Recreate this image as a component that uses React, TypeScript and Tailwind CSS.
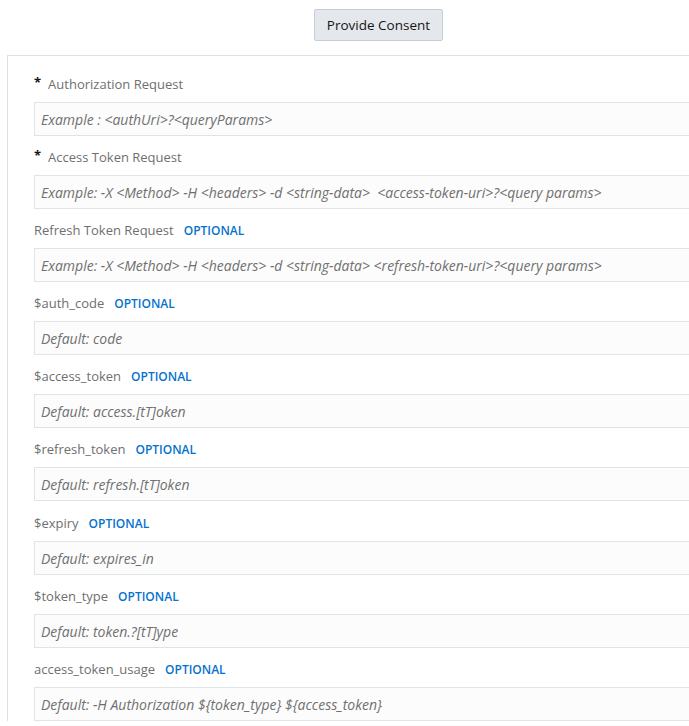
import React from "react";

type Field = {
  label: string;
  required?: boolean;
  optional?: boolean;
  placeholder: string;
};

const fields: Field[] = [
  { label: "Authorization Request", required: true, placeholder: "Example : <authUri>?<queryParams>" },
  {
    label: "Access Token Request",
    required: true,
    placeholder: "Example: -X <Method> -H <headers> -d <string-data>  <access-token-uri>?<query params>",
  },
  {
    label: "Refresh Token Request",
    optional: true,
    placeholder: "Example: -X <Method> -H <headers> -d <string-data> <refresh-token-uri>?<query params>",
  },
  { label: "$auth_code", optional: true, placeholder: "Default: code" },
  { label: "$access_token", optional: true, placeholder: "Default: access.[tT]oken" },
  { label: "$refresh_token", optional: true, placeholder: "Default: refresh.[tT]oken" },
  { label: "$expiry", optional: true, placeholder: "Default: expires_in" },
  { label: "$token_type", optional: true, placeholder: "Default: token.?[tT]ype" },
  {
    label: "access_token_usage",
    optional: true,
    placeholder: "Default: -H Authorization ${token_type} ${access_token}",
  },
];

export default function App() {
  return (
    <div
      className="w-[689px] h-[726px] overflow-hidden bg-white"
      style={{ fontFamily: '"Open Sans", "Noto Sans", sans-serif' }}
    >
      <div className="pt-[9px] pl-[314px]">
        <button className="h-[32px] w-[129px] rounded-[2px] border border-[#c4ced7] bg-[#e4e8ec] pt-[1px] text-[13.5px] text-[#161513]">
          Provide Consent
        </button>
      </div>
      <div className="mt-[14px] ml-[7px] w-[760px] border-l border-t border-[#e0e0e0] pl-[26px] pt-[19px]">
        {fields.map((f, i) => (
          <div key={f.label} className={i === 5 ? "mb-[13px]" : "mb-3"}>
            <div className="flex h-5 items-center mb-[7px]">
              {f.required && (
                <span className="mr-[7px] mt-[-6px] text-[13px] font-bold leading-none text-[#161513]">*</span>
              )}
              <span className="text-[13px] text-[#6f6f6f]">{f.label}</span>
              {f.optional && (
                <span className="ml-[10px] text-[12px] font-semibold text-[#0572ce]">OPTIONAL</span>
              )}
            </div>
            <div className="flex h-[34px] items-center border border-[#dfe4e7] bg-[#fcfcfc] pl-[6px]">
              <span className="whitespace-pre text-[14px] italic text-[#707070]">{f.placeholder}</span>
            </div>
          </div>
        ))}
      </div>
    </div>
  );
}
